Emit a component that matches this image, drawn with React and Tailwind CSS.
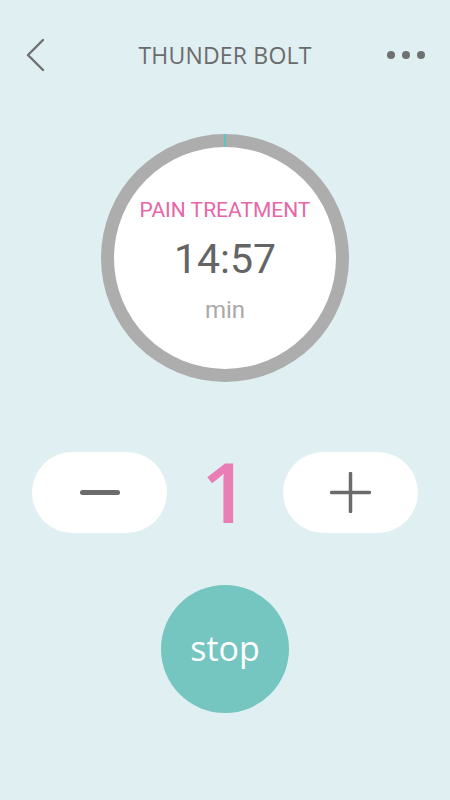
import React from "react";

export default function App() {
  return (
    <div className="w-[450px] h-[800px] bg-[#dfeff2] flex flex-col items-center" style={{ fontFamily: "'Open Sans', sans-serif" }}>
      <div className="w-full h-[70px] mt-[20px] flex items-center justify-between px-[24px] relative">
        <svg width="22" height="34" viewBox="0 0 22 34" className="ml-[1px]">
          <polyline points="18,2 3,17 18,32" fill="none" stroke="#707070" strokeWidth="2.4" strokeLinecap="round" strokeLinejoin="round" />
        </svg>
        <div className="absolute left-0 right-0 text-center text-[23px] text-[#6b6b6b] tracking-[0.2px] leading-none pointer-events-none">THUNDER BOLT</div>
        <div className="flex gap-[7px] mr-[1px]">
          <span className="w-[8px] h-[8px] rounded-full bg-[#707070]" />
          <span className="w-[8px] h-[8px] rounded-full bg-[#707070]" />
          <span className="w-[8px] h-[8px] rounded-full bg-[#707070]" />
        </div>
      </div>

      <div className="mt-[44px] w-[248px] h-[248px] rounded-full bg-[#adadad] p-[13px] relative">
        <div className="absolute left-[123px] top-0 w-[2px] h-[13px] bg-[#5cc6c2]" />
        <div className="w-full h-full rounded-full bg-white flex flex-col items-center" style={{ fontFamily: "Roboto, sans-serif" }}>
          <div className="mt-[53px] text-[21px] leading-none text-[#e766a6]">PAIN TREATMENT</div>
          <div className="mt-[18px] text-[41px] leading-none text-[#646464]">14:57</div>
          <div className="mt-[18px] text-[24px] leading-none text-[#a9a9a9]">min</div>
        </div>
      </div>

      <div className="mt-[70px] w-full flex items-center justify-between px-[32px]">
        <button className="w-[135px] h-[81px] rounded-full bg-white flex items-center justify-center">
          <span className="w-[40px] h-[5px] rounded-full bg-[#6b6b6b]" />
        </button>
        <div className="text-[84px] font-semibold leading-none text-[#ea7db5] -mt-[4px]">1</div>
        <button className="w-[135px] h-[81px] rounded-full bg-white flex items-center justify-center">
          <svg width="41" height="41" viewBox="0 0 41 41">
            <line x1="1.5" y1="20.5" x2="39.5" y2="20.5" stroke="#6b6b6b" strokeWidth="3.5" strokeLinecap="round" />
            <line x1="20.5" y1="1.5" x2="20.5" y2="39.5" stroke="#6b6b6b" strokeWidth="3.5" strokeLinecap="round" />
          </svg>
        </button>
      </div>

      <button className="mt-[52px] w-[128px] h-[128px] rounded-full bg-[#75c5c1] flex items-center justify-center">
        <span className="text-[34px] text-white leading-none -mt-[3px]">stop</span>
      </button>
    </div>
  );
}
